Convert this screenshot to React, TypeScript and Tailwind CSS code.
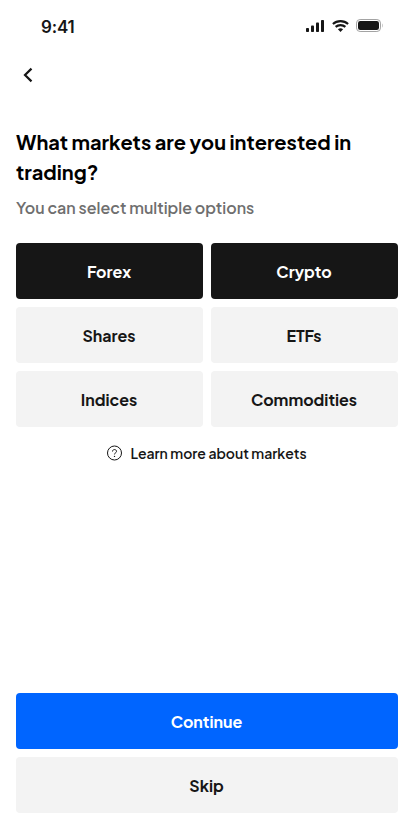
import React, { useState } from "react";

const markets: string[] = [
  "Forex",
  "Crypto",
  "Shares",
  "ETFs",
  "Indices",
  "Commodities",
];

function StatusBar() {
  return (
    <div className="flex h-[51px] items-center justify-between pl-[41px] pr-[31px] text-[#161616]">
      <span className="pt-0.5 font-['Inter',sans-serif] text-[17px] font-semibold leading-6 tracking-[-0.2px]">
        9:41
      </span>
      <div className="flex items-center gap-[7px]">
        <svg width="19" height="12" viewBox="0 0 19 12" fill="currentColor">
          <rect x="0" y="8" width="3" height="4" rx="0.8" />
          <rect x="5" y="5.5" width="3" height="6.5" rx="0.8" />
          <rect x="10" y="2.5" width="3" height="9.5" rx="0.8" />
          <rect x="15" y="0" width="3" height="12" rx="0.8" />
        </svg>
        <svg width="17" height="12" viewBox="0 0 17 12" fill="none">
          <path
            d="M0.9 4C5.1 0.2 11.9 0.2 16.1 4M3.6 6.9C6.3 4.5 10.7 4.5 13.4 6.9"
            stroke="currentColor"
            strokeWidth="2.1"
          />
          <path
            d="M5.9 9.3C7.4 8 9.6 8 11.1 9.3L8.5 12Z"
            fill="currentColor"
          />
        </svg>
        <svg width="27" height="13" viewBox="0 0 27 13" fill="none">
          <rect
            x="0.5"
            y="0.5"
            width="24"
            height="12"
            rx="3.6"
            stroke="#a3a3a3"
          />
          <rect x="2" y="2" width="21" height="9" rx="2.3" fill="currentColor" />
          <path d="M26 4.5C27.2 5.2 27.2 7.8 26 8.5Z" fill="#c4c4c4" />
        </svg>
      </div>
    </div>
  );
}

export default function App() {
  const [selected, setSelected] = useState<string[]>(["Forex", "Crypto"]);

  const toggleMarket = (name: string) => {
    setSelected((prev) =>
      prev.includes(name) ? prev.filter((m) => m !== name) : [...prev, name]
    );
  };

  return (
    <div className="flex min-h-screen w-full flex-col bg-white font-['Plus_Jakarta_Sans','Inter',sans-serif] text-[#161616]">
      <StatusBar />

      <div className="flex h-12 items-center pl-4">
        <button aria-label="Back" className="flex size-6 items-center justify-center">
          <svg width="24" height="24" viewBox="0 0 24 24" fill="none">
            <path
              d="M15.5 5.6L9 12L15.5 18.4"
              stroke="currentColor"
              strokeWidth="2.2"
            />
          </svg>
        </button>
      </div>

      <main className="flex flex-1 flex-col px-4 pb-4 pt-7">
        <h1 className="whitespace-nowrap text-xl font-bold leading-[30px] text-black">
          What markets are you interested in
          <br />
          trading?
        </h1>
        <p className="mt-[9px] text-base font-semibold leading-6 text-[#6f6f6f]">
          You can select multiple options
        </p>

        <div className="mt-[23px] grid grid-cols-2 gap-2">
          {markets.map((market) => (
            <button
              key={market}
              onClick={() => toggleMarket(market)}
              className={`h-14 rounded-[4px] pr-px pt-0.5 text-base font-bold ${
                selected.includes(market)
                  ? "bg-[#161616] text-white"
                  : "bg-[#f3f3f3] text-[#161616]"
              }`}
            >
              {market}
            </button>
          ))}
        </div>

        <button className="mt-4 flex items-center justify-center gap-2 pr-px text-sm font-semibold leading-5">
          <svg width="16" height="16" viewBox="0 0 16 16" fill="none" stroke="currentColor">
            <circle cx="8.5" cy="8" r="7" />
            <path d="M6.5 6.5C6.5 3.9 10.5 3.9 10.5 6.4C10.5 7.9 8.5 7.8 8.5 9.4" />
            <circle cx="8.5" cy="11.4" r="0.7" fill="currentColor" stroke="none" />
          </svg>
          <span className="whitespace-nowrap">Learn more about markets</span>
        </button>

        <div className="mt-auto flex flex-col gap-2">
          <button className="h-14 rounded-[4px] bg-[#0065ff] pr-px pt-0.5 text-base font-bold text-white">
            Continue
          </button>
          <button className="h-14 rounded-[4px] bg-[#f3f3f3] pr-px pt-0.5 text-base font-bold">
            Skip
          </button>
        </div>
      </main>
    </div>
  );
}
